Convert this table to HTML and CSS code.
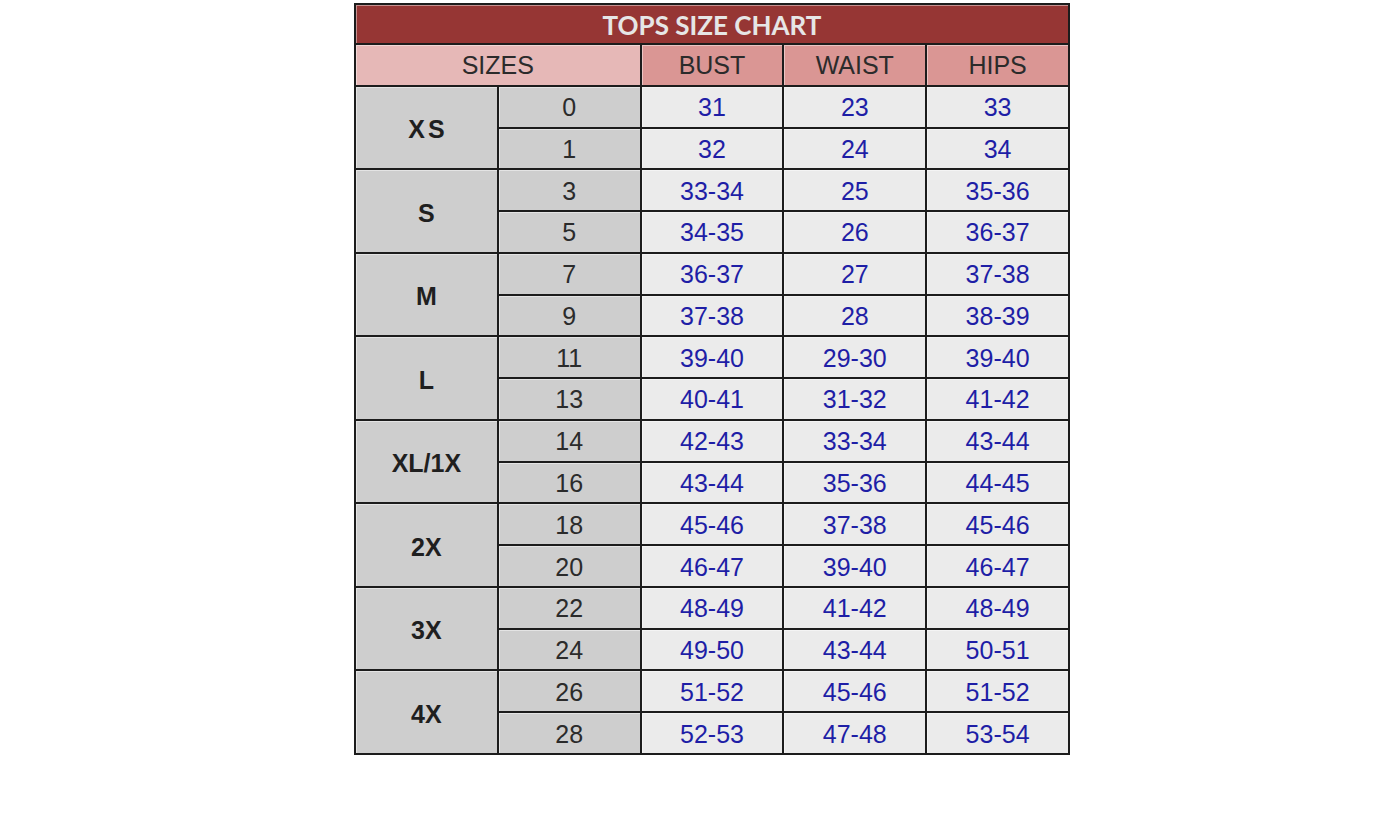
FILE: index.html
```html
<!DOCTYPE html>
<html>
<head>
<meta charset="utf-8">
<link rel="stylesheet" href="styles.css">
</head>
<body>
<div class="page">
  <div class="chart">
    <div class="title">TOPS SIZE CHART</div>
    <div class="hd hd-sizes">SIZES</div>
    <div class="hd">BUST</div>
    <div class="hd">WAIST</div>
    <div class="hd">HIPS</div>

    <div class="size xs">XS</div>
    <div class="num">0</div><div class="val">31</div><div class="val">23</div><div class="val">33</div>
    <div class="num">1</div><div class="val">32</div><div class="val">24</div><div class="val">34</div>

    <div class="size">S</div>
    <div class="num">3</div><div class="val">33-34</div><div class="val">25</div><div class="val">35-36</div>
    <div class="num">5</div><div class="val">34-35</div><div class="val">26</div><div class="val">36-37</div>

    <div class="size">M</div>
    <div class="num">7</div><div class="val">36-37</div><div class="val">27</div><div class="val">37-38</div>
    <div class="num">9</div><div class="val">37-38</div><div class="val">28</div><div class="val">38-39</div>

    <div class="size">L</div>
    <div class="num">11</div><div class="val">39-40</div><div class="val">29-30</div><div class="val">39-40</div>
    <div class="num">13</div><div class="val">40-41</div><div class="val">31-32</div><div class="val">41-42</div>

    <div class="size">XL/1X</div>
    <div class="num">14</div><div class="val">42-43</div><div class="val">33-34</div><div class="val">43-44</div>
    <div class="num">16</div><div class="val">43-44</div><div class="val">35-36</div><div class="val">44-45</div>

    <div class="size">2X</div>
    <div class="num">18</div><div class="val">45-46</div><div class="val">37-38</div><div class="val">45-46</div>
    <div class="num">20</div><div class="val">46-47</div><div class="val">39-40</div><div class="val">46-47</div>

    <div class="size">3X</div>
    <div class="num">22</div><div class="val">48-49</div><div class="val">41-42</div><div class="val">48-49</div>
    <div class="num">24</div><div class="val">49-50</div><div class="val">43-44</div><div class="val">50-51</div>

    <div class="size">4X</div>
    <div class="num">26</div><div class="val">51-52</div><div class="val">45-46</div><div class="val">51-52</div>
    <div class="num">28</div><div class="val">52-53</div><div class="val">47-48</div><div class="val">53-54</div>
  </div>
</div>
</body>
</html>
```
FILE: styles.css
```css
html, body {
  margin: 0;
  padding: 0;
  background: #ffffff;
}

.page {
  padding: 3px 0 0 354px;
}

.chart {
  width: 716px;
  height: 752px;
  box-sizing: border-box;
  display: grid;
  grid-template-columns: repeat(5, 1fr);
  grid-template-rows: 38px repeat(17, 1fr);
  gap: 2px;
  padding: 2px;
  background: #1c1c1c;
  font-family: "Liberation Sans", Arial, sans-serif;
}

.chart > div {
  display: flex;
  align-items: center;
  justify-content: center;
  box-shadow: inset 1px 1px 0 rgba(255, 255, 255, 0.45);
}

.title {
  grid-column: 1 / 6;
  background: #963634;
  color: #e6e6e6;
  font-family: Lato, "Open Sans", sans-serif;
  font-weight: 700;
  font-size: 26px;
  padding-top: 2px;
}

.hd {
  background: #da9694;
  color: #2b2b2b;
  font-size: 25px;
  padding-top: 2px;
}

.hd-sizes {
  grid-column: 1 / 3;
  background: #e6b8b7;
}

.size {
  grid-row: span 2;
  background: #cecece;
  color: #1f1f1f;
  font-weight: 700;
  font-size: 25px;
  padding-top: 4px;
}

.xs {
  letter-spacing: 3px;
  padding-left: 3px;
}

.num {
  background: #cecece;
  color: #2b2b2b;
  font-size: 25px;
  padding-top: 2px;
}

.val {
  background: #ebebeb;
  color: #1e1ea6;
  font-size: 25px;
  padding-top: 2px;
}
```
